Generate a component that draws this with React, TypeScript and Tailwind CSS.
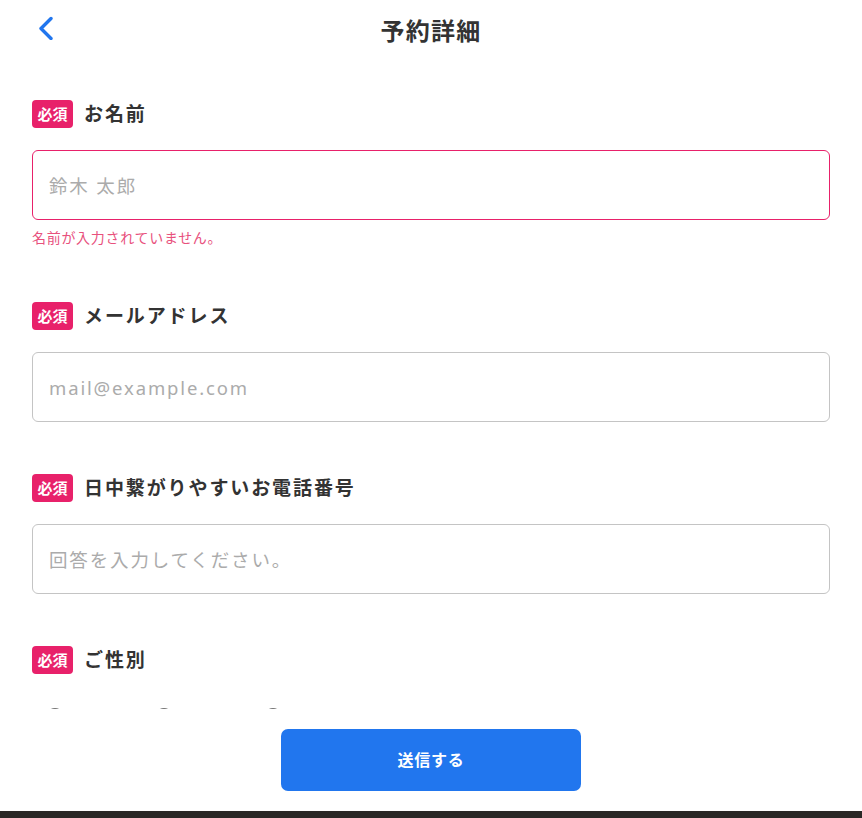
import React from "react";

const FONT = "font-['Noto_Sans','Noto_Sans_CJK_JP',sans-serif]";

function Badge() {
  return (
    <span className="inline-flex h-[28px] w-[41px] items-center justify-center rounded-[4px] bg-[#e8216a] text-[15px] font-bold leading-none text-white">
      必須
    </span>
  );
}

function Label({ text }: { text: string }) {
  return (
    <div className="flex h-[28px] items-center gap-[11px]">
      <Badge />
      <span className="text-[19px] font-bold tracking-[0.1em] text-[#333]">{text}</span>
    </div>
  );
}

function Field({
  label,
  placeholder,
  error,
}: {
  label: string;
  placeholder: string;
  error?: string;
}) {
  return (
    <div className="mb-[52px]">
      <Label text={label} />
      <input
        className={`mt-[22px] block h-[70px] w-full rounded-[6px] border bg-white px-[16px] text-[18.5px] tracking-[0.1em] outline-none placeholder:text-[#ababab] ${
          error ? "border-[#e8216a]" : "border-[#c4c4c4]"
        }`}
        placeholder={placeholder}
      />
      {error && (
        <p className="mt-[6px] text-[14px] leading-[24px] tracking-[0.05em] text-[#e8517d]">{error}</p>
      )}
    </div>
  );
}

export default function App() {
  return (
    <div className={`flex h-[818px] w-full flex-col bg-white ${FONT}`}>
      <header className="relative flex h-[62px] shrink-0 items-center justify-center">
        <button className="absolute left-[34px] top-[16px] h-[24px] w-[24px]">
          <svg width="24" height="24" viewBox="0 0 24 24" fill="none">
            <path d="M17 2.5 L7 12.5 L17 22.5" stroke="#2176ee" strokeWidth="3.4" strokeLinecap="round" strokeLinejoin="round" />
          </svg>
        </button>
        <h1 className="text-[24px] font-bold tracking-[0.05em] text-[#333]">予約詳細</h1>
      </header>
      <main className="flex-1 overflow-hidden px-[32px] pt-[38px]">
        <Field label="お名前" placeholder="鈴木 太郎" error="名前が入力されていません。" />
        <Field label="メールアドレス" placeholder="mail@example.com" />
        <Field label="日中繋がりやすいお電話番号" placeholder="回答を入力してください。" />
        <div>
          <Label text="ご性別" />
          <div className="mt-[34px] flex pl-[14px]">
            {[0, 1, 2].map((g) => (
              <div key={g} className="w-[109px]">
                <span className="block h-[18px] w-[18px] rounded-full border-2 border-[#757575]" />
              </div>
            ))}
          </div>
        </div>
      </main>
      <footer className="flex shrink-0 justify-center bg-white py-[20px]">
        <button className="h-[62px] w-[300px] rounded-[7px] bg-[#2176ee] text-[16px] font-bold tracking-[0.05em] text-white">
          送信する
        </button>
      </footer>
      <div className="h-[7px] shrink-0 bg-[#2a2826]" />
    </div>
  );
}
